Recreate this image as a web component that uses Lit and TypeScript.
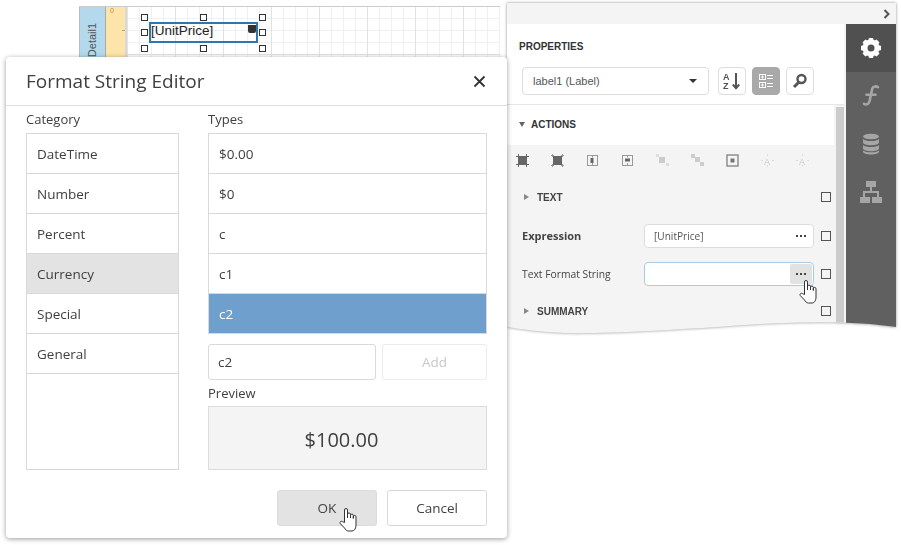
import { LitElement, css, html, svg } from "lit";
import { customElement } from "lit/decorators.js";

const CATEGORIES = ["DateTime", "Number", "Percent", "Currency", "Special", "General"];
const TYPES = ["$0.00", "$0", "c", "c1", "c2"];

const hand = (cls: string) => html`
  <svg class=${cls} width="18" height="24" viewBox="0 0 18 24">
    <path
      d="M5.500 14.500V2a1.500 1.500 0 0 1 3 0v8V6.500a1.500 1.500 0 0 1 3 0V10V7.500a1.400 1.400 0 0 1 2.800 0v3V8.800a1.350 1.350 0 0 1 2.700 0V17c0 3-1.300 6-4 6H9.500c-2 0-3-1.300-4-3L1.300 15.600c-1-1.500.9-3 2.100-2z"
      fill="#fff"
      stroke="#333"
      stroke-width="1"
      stroke-linejoin="round"
    />
  </svg>
`;

const gear = html`
  <svg width="22" height="22" viewBox="0 0 22 22">
    <circle cx="11" cy="11" r="6" fill="none" stroke="#fff" stroke-width="5" />
    ${[0, 45, 90, 135, 180, 225, 270, 315].map(
      (a) => svg`<rect x="8.600" y="1" width="4.800" height="4" rx="1" fill="#fff" transform="rotate(${a} 11 11)" />`
    )}
  </svg>
`;

const fx = html`
  <svg width="20" height="24" viewBox="0 0 20 24">
    <path
      d="M17 3.200c-1.600-1.300-4.800-1.200-5.800 1.600L8.600 17c-.7 3.200-3.400 4.300-5.600 2.800M5.500 10.800h9"
      fill="none"
      stroke="#a6a6a6"
      stroke-width="2.600"
      stroke-linecap="round"
    />
  </svg>
`;

const db = html`
  <svg width="18" height="22" viewBox="0 0 18 22" fill="#a6a6a6">
    <ellipse cx="9" cy="3.500" rx="8" ry="2.800" />
    <path d="M1 6c1.500 1.500 4.500 2 8 2s6.500-.5 8-2v3.500c0 1.600-3.600 2.800-8 2.800s-8-1.200-8-2.800z" />
    <path d="M1 12c1.500 1.500 4.500 2 8 2s6.500-.5 8-2v3.500c0 1.600-3.600 2.800-8 2.800s-8-1.200-8-2.800z" />
    <path d="M1 17.500c1.500 1.300 4.500 1.800 8 1.800s6.500-.5 8-1.800v1.200c0 1.600-3.600 2.800-8 2.800s-8-1.200-8-2.800z" />
  </svg>
`;

const tree = html`
  <svg width="22" height="22" viewBox="0 0 22 22" fill="#a6a6a6">
    <rect x="6" y="0" width="10" height="6" />
    <rect x="0" y="16" width="10" height="6" />
    <rect x="12" y="16" width="10" height="6" />
    <path d="M10 6h2v4h7v6h-2v-4H5v4H3v-6h7z" />
  </svg>
`;

const sortAz = html`
  <svg width="20" height="20" viewBox="0 0 20 20">
    <text x="1" y="8.500" font-family="Liberation Sans" font-size="9" font-weight="700" fill="#555">A</text>
    <text x="1" y="18" font-family="Liberation Sans" font-size="9" font-weight="700" fill="#555">Z</text>
    <path d="M14 2v15M10.800 13.500l3.200 3.800 3.200-3.800" fill="none" stroke="#555" stroke-width="2" />
  </svg>
`;

const groups = html`
  <svg width="16" height="16" viewBox="0 0 16 16" fill="none" stroke="#fff" stroke-width="1">
    <rect x="1.500" y="1.500" width="6" height="5" />
    <rect x="1.500" y="9.500" width="6" height="5" />
    <path d="M3 4h3M4.500 2.500v3M3 12h3M4.500 10.500v3M9 2.500h6M9 5.500h6M9 10.500h6M9 13.500h6" />
  </svg>
`;

const search = html`
  <svg width="18" height="18" viewBox="0 0 18 18" fill="none" stroke="#555">
    <circle cx="10.500" cy="7" r="4" stroke-width="2.400" />
    <path d="M7.500 10.500L3 15" stroke-width="3" />
  </svg>
`;

// alignment toolbar, in panel order; the pale ones are disabled
const alignIcons = [
  svg`<rect x="3" y="3" width="7" height="7" fill="#666"/><path d="M0 2.500h13M0 10.500h13M2.500 0v13M10.500 0v13" stroke="#666" fill="none"/>`,
  svg`<rect x="2" y="2" width="9" height="9" fill="#666"/><path d="M0 1.500h3M10 1.500h3M0 11.500h3M10 11.500h3M1.500 0v3M11.500 0v3M1.500 10v3M11.500 10v3" stroke="#999" fill="none"/>`,
  svg`<rect x="1.500" y="1.500" width="10" height="10" fill="none" stroke="#999"/><rect x="4.500" y="4" width="3" height="5" fill="#666"/><path d="M6.500 1.500v2M6.500 9v2.500" stroke="#999"/>`,
  svg`<rect x="1.500" y="1.500" width="10" height="10" fill="none" stroke="#999"/><rect x="4" y="4.500" width="5" height="3" fill="#666"/><path d="M6.500 1.500v2M6.500 9v2.500" stroke="#999"/>`,
  svg`<rect x="0" y="0" width="3" height="3" fill="#ddd"/><rect x="3" y="3" width="6" height="6" fill="#ccc"/><rect x="10" y="9" width="3" height="3" fill="#ddd"/>`,
  svg`<rect x="0" y="0" width="4" height="4" fill="#ccc"/><rect x="4" y="3" width="5" height="5" fill="#ccc"/><rect x="9" y="8" width="4" height="4" fill="#ccc"/>`,
  svg`<rect x="1" y="1" width="11" height="11" fill="none" stroke="#888" stroke-width="1.400"/><rect x="4.500" y="4.500" width="4" height="4" fill="#777"/>`,
  svg`<text x="3" y="10.500" font-size="9" font-family="Liberation Sans" fill="#ccc">A</text><path d="M6.500 0v2M6.500 11v2M0 6.500h2M11 6.500h2" stroke="#ddd"/>`,
  svg`<text x="3" y="10.500" font-size="9" font-family="Liberation Sans" fill="#ccc">A</text><path d="M6.500 0v2M6.500 11v2M0 6.500h2M11 6.500h2" stroke="#ddd"/>`,
];

const HANDLES = [
  [144, 17], [203, 17], [262, 17],
  [144, 32], [262, 32],
  [144, 48], [203, 48], [262, 48],
];

@customElement("app-root")
export class AppRoot extends LitElement {
  static styles = css`
    :host {
      display: block;
      position: relative;
      width: 901px;
      height: 545px;
      overflow: hidden;
      background: #fff;
      font-family: "Open Sans", "Noto Sans", sans-serif;
      color: #404040;
    }

    .surface {
      position: absolute;
      left: 79px;
      top: 6px;
      width: 421px;
      height: 60px;
      display: flex;
      border-top: 1px solid #ccc;
    }
    .band {
      width: 27px;
      background: #b4d9ed;
      border-left: 1px solid #bbb;
      border-right: 1px solid #aaa;
      box-sizing: border-box;
      display: flex;
      align-items: center;
      justify-content: center;
    }
    .band span {
      display: block;
      transform: rotate(-90deg) translateX(-3px);
      font: 11px "Liberation Sans", sans-serif;
      color: #555;
    }
    .ruler {
      width: 21px;
      box-sizing: border-box;
      border-right: 2px solid #d8d8d8;
      background-color: #fde4a9;
      background-image: linear-gradient(#b9a77c, #b9a77c);
      background-repeat: no-repeat;
      background-size: 3px 1px;
      background-position: right 23px;
      font: 7px/7px "Liberation Sans", sans-serif;
      color: #b98a55;
      padding-left: 4px;
    }
    .grid {
      flex: 1;
      background-color: #fff;
      background-image:
        linear-gradient(#e2e2e2 1px, transparent 1px),
        linear-gradient(90deg, #e2e2e2 1px, transparent 1px),
        linear-gradient(#f0f0f0 1px, transparent 1px),
        linear-gradient(90deg, #f0f0f0 1px, transparent 1px);
      background-size: 48px 48px, 48px 48px, 12px 12px, 12px 12px;
      background-position: 0 -1px, 0 0, 0 -1px, 0 0;
    }

    .selection {
      position: absolute;
      left: 149px;
      top: 22px;
      width: 109px;
      height: 21px;
      box-sizing: border-box;
      border: 2px solid #2f76ad;
      font: 13.500px/13px "Liberation Sans", sans-serif;
      color: #222;
    }
    .smart-tag {
      position: absolute;
      right: 0;
      top: 1px;
      width: 8px;
      height: 8px;
      border-radius: 0 0 2px 2px;
      background: #333;
    }
    .handle {
      position: absolute;
      width: 7px;
      height: 7px;
      box-sizing: border-box;
      background: #fff;
      border: 1px solid #333;
    }

    .panel-wrap {
      position: absolute;
      left: 505px;
      top: 3px;
      width: 392px;
      height: 331px;
      filter: drop-shadow(0 0 1.500px rgba(0, 0, 0, 0.45));
    }
    .panel {
      width: 391px;
      height: 331px;
      display: flex;
      flex-direction: column;
      background: #f4f4f4;
      clip-path: path("M2 0H391V324C350 318 300 318 240 322C170 327 100 331 60 330C35 329 15 326 2 324Z");
    }
    .topbar {
      flex: none;
      height: 21px;
      display: flex;
      align-items: center;
      justify-content: flex-end;
      padding-right: 5px;
    }
    .main {
      flex: 1;
      display: flex;
      min-height: 0;
    }
    .content {
      flex: 1;
      display: flex;
      flex-direction: column;
      min-width: 0;
    }
    .sidebar {
      flex: none;
      width: 50px;
      background: #606060;
      margin-left: 2px;
      display: flex;
      flex-direction: column;
    }
    .side-item {
      height: 48px;
      display: flex;
      align-items: center;
      justify-content: center;
    }
    .side-item.active {
      background: #505050;
    }

    .props-head {
      background: #fff;
      height: 81px;
      box-sizing: border-box;
      border-bottom: 1px solid #e6e6e6;
      padding: 16px 0 0 14px;
    }
    .props-title {
      font: 700 10px/14px "Liberation Sans", sans-serif;
      color: #333;
    }
    .tools {
      display: flex;
      margin: 13px 0 0 3px;
      gap: 6px;
    }
    .select {
      width: 187px;
      height: 28px;
      box-sizing: border-box;
      border: 1px solid #ddd;
      border-radius: 4px;
      display: flex;
      align-items: center;
      justify-content: space-between;
      padding: 0 11px 0 10px;
      font: 11px "Liberation Sans", sans-serif;
      color: #555;
      margin-right: 3px;
    }
    .caret {
      width: 0;
      height: 0;
      border: 4px solid transparent;
      border-top: 4px solid #333;
      border-bottom: 0;
    }
    .tool {
      width: 28px;
      height: 28px;
      box-sizing: border-box;
      border: 1px solid #ddd;
      border-radius: 4px;
      display: flex;
      align-items: center;
      justify-content: center;
      background: #fff;
    }
    .tool.on {
      background: #a9a9a9;
      border-color: #a9a9a9;
    }

    .scroll-area {
      flex: 1;
      display: flex;
      min-height: 0;
    }
    .sections {
      flex: 1;
      min-width: 0;
    }
    .scrollbar {
      flex: none;
      width: 8px;
      margin: 2px 0 0 2px;
      background: #ccc;
    }
    .actions-head {
      height: 40px;
      box-sizing: border-box;
      padding: 0 0 2px 14px;
      background: #fff;
      display: flex;
      align-items: center;
      gap: 6px;
      font: 700 10px "Liberation Sans", sans-serif;
      color: #333;
    }
    .tri-down {
      width: 0;
      height: 0;
      border: 3px solid transparent;
      border-top: 5px solid #666;
      border-bottom: 0;
    }
    .tri-right {
      width: 0;
      height: 0;
      border: 3px solid transparent;
      border-left: 5px solid #888;
      border-right: 0;
    }
    .icons {
      height: 30px;
      display: flex;
      align-items: center;
      gap: 22px;
      padding-left: 11px;
    }
    .icons svg {
      display: block;
    }
    .row {
      display: flex;
      align-items: center;
      position: relative;
      padding-right: 3px;
    }
    .group-row {
      height: 38px;
      padding-left: 19px;
      gap: 8px;
      font: 700 10px "Liberation Sans", sans-serif;
      color: #444;
    }
    .group-row.text {
      margin-top: 3px;
    }
    .prop-row {
      padding-left: 17px;
      font-size: 10.300px;
      color: #444;
    }
    .prop-row.expr {
      height: 40px;
    }
    .prop-row.format {
      height: 36px;
    }
    .prop-row .name {
      flex: none;
      width: 122px;
    }
    .prop-row .name.bold {
      font-size: 11px;
      font-weight: 700;
      margin-bottom: 2px;
    }
    .field {
      flex: none;
      width: 170px;
      height: 24px;
      box-sizing: border-box;
      border: 1px solid #ddd;
      border-radius: 4px;
      background: #fff;
      display: flex;
      align-items: center;
      justify-content: space-between;
      padding: 0 1px 0 9px;
      font-size: 10.100px;
      color: #555;
    }
    .field.focus {
      border-color: #a9cbe6;
    }
    .dots {
      width: 22px;
      height: 20px;
      border-radius: 2px;
      display: flex;
      align-items: center;
      justify-content: center;
      gap: 2px;
    }
    .dots i {
      width: 2px;
      height: 2px;
      background: #444;
    }
    .dots.hover {
      background: #e2e2e2;
    }
    .check {
      flex: none;
      width: 8px;
      height: 8px;
      border: 1px solid #555;
      margin-left: auto;
    }
    .prop-row .check {
      margin-left: 7px;
    }
    .cursor-a {
      position: absolute;
      left: 294px;
      top: 24px;
    }

    .dialog {
      position: absolute;
      left: 6px;
      top: 57px;
      width: 501px;
      height: 481px;
      box-sizing: border-box;
      background: #fff;
      border-radius: 4px;
      box-shadow: 0 1px 5px rgba(0, 0, 0, 0.4);
      display: flex;
      flex-direction: column;
    }
    .dlg-head {
      flex: none;
      height: 49px;
      box-sizing: border-box;
      border-bottom: 1px solid #dedede;
      display: flex;
      align-items: center;
      justify-content: space-between;
      padding: 0 21px 0 20px;
      font-size: 19px;
    }
    .dlg-body {
      flex: none;
      display: flex;
      gap: 29px;
      padding: 0 20px;
    }
    .col {
      display: flex;
      flex-direction: column;
    }
    .col.left {
      width: 153px;
    }
    .col.right {
      width: 279px;
    }
    .cap {
      height: 27px;
      line-height: 26px;
      font-size: 13px;
    }
    .cap.preview {
      height: 26px;
      line-height: 26px;
    }
    .list {
      box-sizing: border-box;
      border: 1px solid #d9d9d9;
      font-size: 13.500px;
    }
    .list.tall {
      height: 337px;
    }
    .item {
      height: 40px;
      box-sizing: border-box;
      border-bottom: 1px solid #d9d9d9;
      padding-left: 10px;
      display: flex;
      align-items: center;
    }
    .item.sel {
      background: #e3e3e3;
    }
    .item.hi {
      height: 39px;
      background: #6f9fcc;
      color: #fff;
      border-bottom: 0;
    }
    .add-row {
      display: flex;
      gap: 6px;
      margin-top: 10px;
    }
    .input {
      width: 168px;
      height: 36px;
      box-sizing: border-box;
      border: 1px solid #d9d9d9;
      border-radius: 3px;
      padding-left: 9px;
      display: flex;
      align-items: center;
      font-size: 13.500px;
    }
    .btn {
      height: 36px;
      box-sizing: border-box;
      border: 1px solid #d9d9d9;
      border-radius: 3px;
      background: #fff;
      display: flex;
      align-items: center;
      justify-content: center;
      font-size: 13.500px;
    }
    .btn.add {
      flex: 1;
      border-color: #ececec;
      color: #c8c8c8;
    }
    .btn.wide {
      width: 100px;
    }
    .btn.pressed {
      background: #e3e3e3;
      border-color: #dcdcdc;
    }
    .preview-box {
      height: 64px;
      box-sizing: border-box;
      border: 1px solid #dcdcdc;
      background: #f4f4f4;
      display: flex;
      align-items: center;
      justify-content: center;
      padding: 2px 12px 0 0;
      font-size: 20px;
    }
    .dlg-foot {
      display: flex;
      justify-content: flex-end;
      gap: 10px;
      margin-top: 20px;
      padding-right: 20px;
      position: relative;
    }
    .cursor-b {
      position: absolute;
      left: 333px;
      top: 18px;
    }
  `;

  render() {
    return html`
      <div class="surface">
        <div class="band"><span>Detail1</span></div>
        <div class="ruler">0</div>
        <div class="grid"></div>
      </div>
      <div class="selection">[UnitPrice]<div class="smart-tag"></div></div>
      ${HANDLES.map(
        ([x, y]) => html`<div class="handle" style="left:${x - 3}px;top:${y - 3}px"></div>`
      )}

      <div class="panel-wrap">
        <div class="panel">
          <div class="topbar">
            <svg width="8" height="10" viewBox="0 0 8 10">
              <path d="M1.500 1l4 4-4 4" fill="none" stroke="#555" stroke-width="2" />
            </svg>
          </div>
          <div class="main">
            <div class="content">
              <div class="props-head">
                <div class="props-title">PROPERTIES</div>
                <div class="tools">
                  <div class="select"><span>label1 (Label)</span><span class="caret"></span></div>
                  <div class="tool">${sortAz}</div>
                  <div class="tool on">${groups}</div>
                  <div class="tool">${search}</div>
                </div>
              </div>
              <div class="scroll-area">
                <div class="sections">
                  <div class="actions-head"><span class="tri-down"></span>ACTIONS</div>
                  <div class="icons">
                    ${alignIcons.map(
                      (d) => html`<svg width="13" height="13" viewBox="0 0 13 13">${d}</svg>`
                    )}
                  </div>
                  <div class="row group-row text">
                    <span class="tri-right"></span>TEXT<span class="check"></span>
                  </div>
                  <div class="row prop-row expr">
                    <span class="name bold">Expression</span>
                    <div class="field">
                      <span>[UnitPrice]</span>
                      <span class="dots"><i></i><i></i><i></i></span>
                    </div>
                    <span class="check"></span>
                  </div>
                  <div class="row prop-row format">
                    <span class="name">Text Format String</span>
                    <div class="field focus">
                      <span></span>
                      <span class="dots hover"><i></i><i></i><i></i></span>
                    </div>
                    <span class="check"></span>
                    ${hand("cursor-a")}
                  </div>
                  <div class="row group-row">
                    <span class="tri-right"></span>SUMMARY<span class="check"></span>
                  </div>
                </div>
                <div class="scrollbar"></div>
              </div>
            </div>
            <div class="sidebar">
              <div class="side-item active">${gear}</div>
              <div class="side-item">${fx}</div>
              <div class="side-item">${db}</div>
              <div class="side-item">${tree}</div>
              <div style="flex:1"></div>
            </div>
          </div>
        </div>
      </div>

      <div class="dialog">
        <div class="dlg-head">
          <span>Format String Editor</span>
          <svg width="13" height="13" viewBox="0 0 13 13">
            <path d="M1.500 1.500l10 10M11.500 1.500l-10 10" stroke="#333" stroke-width="1.800" fill="none" />
          </svg>
        </div>
        <div class="dlg-body">
          <div class="col left">
            <div class="cap">Category</div>
            <div class="list tall">
              ${CATEGORIES.map(
                (c) => html`<div class="item ${c === "Currency" ? "sel" : ""}">${c}</div>`
              )}
            </div>
          </div>
          <div class="col right">
            <div class="cap">Types</div>
            <div class="list">
              ${TYPES.map((t) => html`<div class="item ${t === "c2" ? "hi" : ""}">${t}</div>`)}
            </div>
            <div class="add-row">
              <div class="input">c2</div>
              <div class="btn add">Add</div>
            </div>
            <div class="cap preview">Preview</div>
            <div class="preview-box">$100.00</div>
          </div>
        </div>
        <div class="dlg-foot">
          <div class="btn wide pressed">OK</div>
          <div class="btn wide">Cancel</div>
          ${hand("cursor-b")}
        </div>
      </div>
    `;
  }
}
